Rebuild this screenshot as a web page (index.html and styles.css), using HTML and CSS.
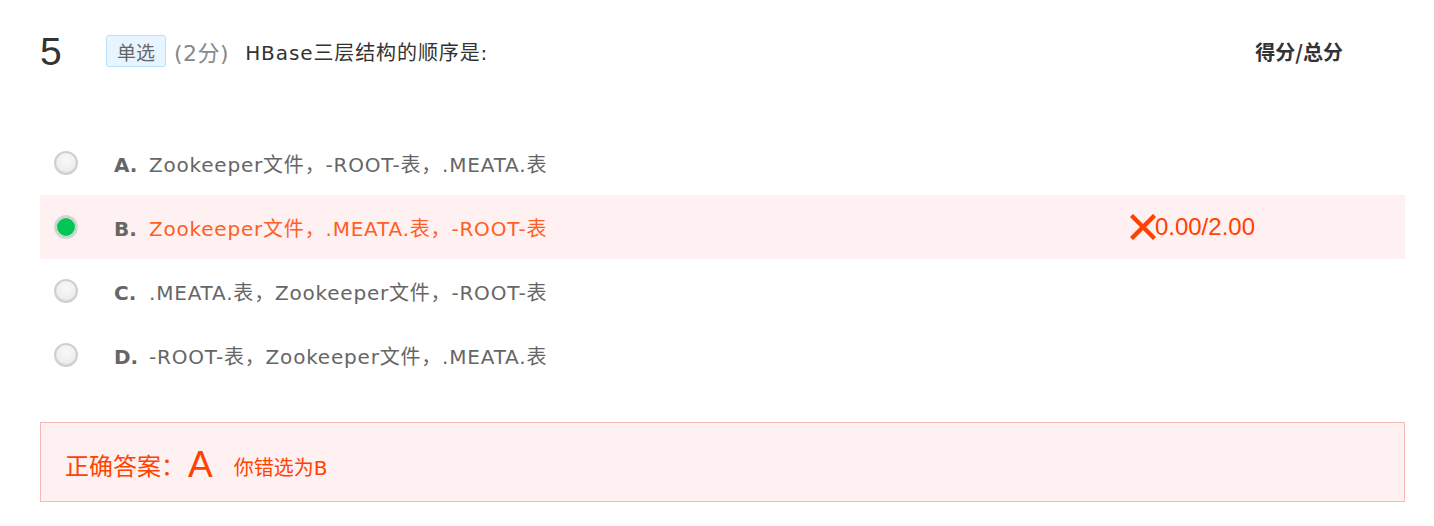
FILE: index.html
```html
<!DOCTYPE html>
<html lang="zh">
<head>
<meta charset="utf-8">
<link rel="stylesheet" href="styles.css">
</head>
<body>
<div class="question">
  <div class="q-head">
    <span class="q-num">5</span>
    <span class="q-type">单选</span>
    <span class="q-score">(2分)</span>
    <span class="q-title">HBase三层结构的顺序是:</span>
    <span class="q-total">得分/总分</span>
  </div>
  <ul class="options">
    <li class="option">
      <span class="radio"></span>
      <span class="opt-body"><span class="opt-label">A.</span><span class="opt-text">Zookeeper文件，-ROOT-表，.MEATA.表</span></span>
    </li>
    <li class="option option-wrong">
      <span class="radio radio-on"></span>
      <span class="opt-body"><span class="opt-label">B.</span><span class="opt-text">Zookeeper文件，.MEATA.表，-ROOT-表</span></span>
      <span class="opt-score"><svg class="cross" viewBox="0 0 26 26" width="26" height="26"><path d="M3 3 L23 23 M23 3 L3 23" stroke="#ff4200" stroke-width="4.4" stroke-linecap="square" fill="none"/></svg>0.00/2.00</span>
    </li>
    <li class="option">
      <span class="radio"></span>
      <span class="opt-body"><span class="opt-label">C.</span><span class="opt-text">.MEATA.表，Zookeeper文件，-ROOT-表</span></span>
    </li>
    <li class="option">
      <span class="radio"></span>
      <span class="opt-body"><span class="opt-label">D.</span><span class="opt-text">-ROOT-表，Zookeeper文件，.MEATA.表</span></span>
    </li>
  </ul>
  <div class="answer">
    <span class="ans-label">正确答案：</span>
    <span class="ans-key">A</span>
    <span class="ans-note">你错选为B</span>
  </div>
</div>
</body>
</html>
```

FILE: styles.css
```css
* { box-sizing: border-box; }
html, body { margin: 0; padding: 0; background: #fff; }
body {
  font-family: "DejaVu Sans", "Noto Sans CJK SC", sans-serif;
  color: #666;
}
.question {
  width: 1365px;
  margin-left: 40px;
  padding-top: 28px;
}
.q-head {
  display: flex;
  align-items: center;
  height: 46px;
}
.q-num {
  font-family: "Liberation Sans", sans-serif;
  font-size: 39px;
  color: #333;
  width: 66px;
  line-height: 1;
}
.q-type {
  display: inline-flex;
  align-items: center;
  justify-content: center;
  width: 60px;
  height: 32px;
  border: 1px solid #b9e0fb;
  background: #e6f5ff;
  border-radius: 3px;
  font-size: 19px;
  color: #666;
}
.q-score {
  margin-left: 8px;
  font-size: 22px;
  color: #888;
  letter-spacing: 0.5px;
}
.q-title {
  margin-left: 16px;
  font-size: 20px;
  color: #333;
  letter-spacing: 0.9px;
}
.q-total {
  margin-left: auto;
  margin-right: 62px;
  font-family: "Noto Sans CJK SC", sans-serif;
  font-size: 20px;
  font-weight: bold;
  color: #333;
}
.options {
  list-style: none;
  margin: 57px 0 0;
  padding: 0;
}
.option {
  display: flex;
  align-items: center;
  height: 64px;
  padding-left: 14px;
  font-size: 20px;
}
.option-wrong {
  background: #fff1f1;
}
.radio {
  width: 24px;
  height: 24px;
  border-radius: 50%;
  border: 2px solid #cfcfcf;
  background: radial-gradient(circle at 50% 35%, #fafafa 0%, #ececec 70%, #dcdcdc 100%);
  box-shadow: inset 0 -1px 1px rgba(0,0,0,0.06);
  flex: none;
}
.radio-on {
  border: 2px solid #d6d6d6;
  background: #04c453;
  box-shadow: inset 0 0 0 1px #e8e8e8;
}
.opt-body {
  margin-left: 36px;
}
.opt-label {
  display: inline-block;
  font-weight: bold;
  color: #666;
  width: 35px;
}
.opt-text {
  color: #666;
  letter-spacing: 0.8px;
}
.option-wrong .opt-text {
  color: #ff5e26;
}
.opt-score {
  margin-left: auto;
  margin-right: 150px;
  display: inline-flex;
  align-items: center;
  font-family: "Liberation Sans", sans-serif;
  font-size: 24px;
  color: #ff4200;
}
.cross {
  display: block;
  margin-right: -1px;
}
.answer {
  margin-top: 35px;
  height: 80px;
  border: 1px solid #f7b8b8;
  background: #fff1f1;
  display: flex;
  align-items: center;
  padding-left: 24px;
  padding-top: 4px;
  color: #ff4200;
}
.ans-label {
  font-family: "Noto Sans CJK SC", sans-serif;
  font-size: 24px;
}
.ans-key {
  margin-left: 3px;
  font-family: "Liberation Sans", sans-serif;
  font-size: 37px;
  line-height: 1;
}
.ans-note {
  margin-left: 21px;
  font-size: 20px;
  padding-top: 4px;
}
```
